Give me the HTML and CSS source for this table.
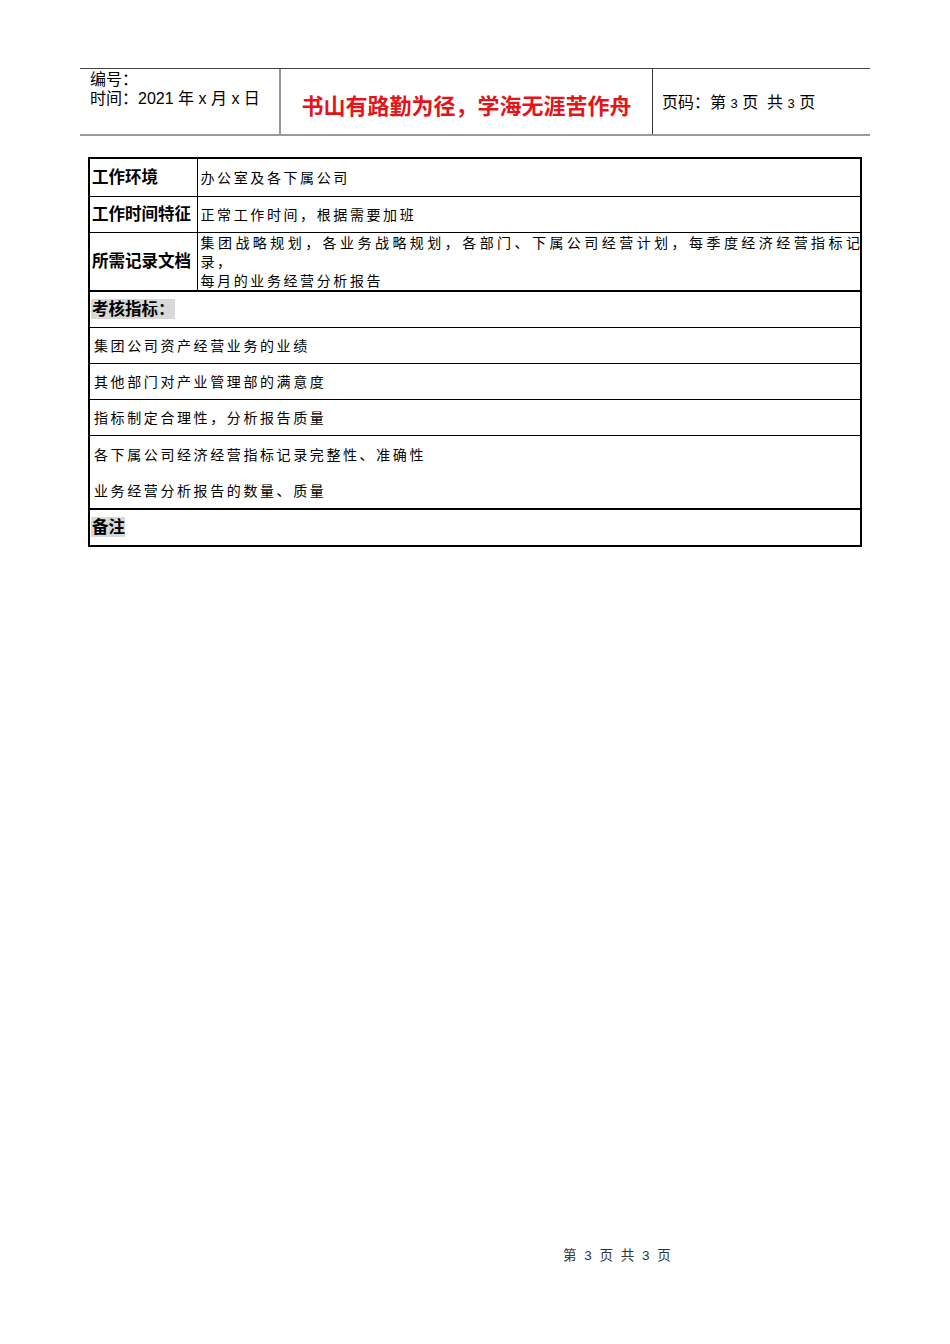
FILE: index.html
```html
<!DOCTYPE html>
<html lang="zh-CN">
<head>
<meta charset="utf-8">
<title>岗位说明书</title>
<link rel="stylesheet" href="styles.css">
</head>
<body>
<div class="page">
  <header class="head">
    <div class="head-left">
      <div>编号：</div>
      <div>时间：2021 年 x 月 x 日</div>
    </div>
    <div class="head-mid">书山有路勤为径，学海无涯苦作舟</div>
    <div class="head-right">页码：第 <span class="num">3</span> 页&nbsp; 共 <span class="num">3</span> 页</div>
  </header>

  <table class="grid">
    <colgroup><col class="c1"><col class="c2"></colgroup>
    <tr class="r38">
      <th>工作环境</th>
      <td>办公室及各下属公司</td>
    </tr>
    <tr class="r36">
      <th>工作时间特征</th>
      <td>正常工作时间，根据需要加班</td>
    </tr>
    <tr class="r59 thick">
      <th>所需记录文档</th>
      <td class="multi"><div class="just">集团战略规划，各业务战略规划，各部门、下属公司经营计划，每季度经济经营指标记</div><div>录，</div><div>每月的业务经营分析报告</div></td>
    </tr>
    <tr class="r36">
      <td colspan="2" class="sec"><span class="hl">考核指标：</span></td>
    </tr>
    <tr class="r36">
      <td colspan="2" class="item">集团公司资产经营业务的业绩</td>
    </tr>
    <tr class="r36">
      <td colspan="2" class="item">其他部门对产业管理部的满意度</td>
    </tr>
    <tr class="r36">
      <td colspan="2" class="item">指标制定合理性，分析报告质量</td>
    </tr>
    <tr class="r73 thick">
      <td colspan="2" class="item pair"><div class="ln">各下属公司经济经营指标记录完整性、准确性</div><div class="ln">业务经营分析报告的数量、质量</div></td>
    </tr>
    <tr class="r37">
      <td colspan="2" class="sec"><span class="hl">备注</span></td>
    </tr>
  </table>

  <footer class="foot">第 3 页 共 3 页</footer>
</div>
</body>
</html>
```

FILE: styles.css
```css
html, body {
  margin: 0;
  padding: 0;
  background: #fff;
}
body {
  font-family: "Liberation Sans", "Noto Sans CJK SC", sans-serif;
  color: #000;
}
.page {
  width: 950px;
  height: 1344px;
  display: flex;
  flex-direction: column;
  box-sizing: border-box;
  padding-top: 68px;
}
.head {
  margin-left: 80px;
  width: 790px;
  height: 68px;
  box-sizing: border-box;
  border-top: 1px solid #444;
  border-bottom: 2px solid #999;
  display: flex;
}
.head-left {
  width: 201px;
  box-sizing: border-box;
  padding: 1px 0 0 10px;
  font-size: 16px;
  line-height: 19px;
  border-right: 2px solid #999;
}
.head-mid {
  width: 372px;
  box-sizing: border-box;
  border-right: 1px solid #333;
  color: #e3151b;
  font-size: 22px;
  font-weight: bold;
  text-align: center;
  padding-top: 21px;
  line-height: 28px;
  font-family: "Noto Sans CJK SC", sans-serif;
}
.head-right {
  flex: 1;
  padding: 24px 0 0 9px;
  font-size: 16px;
  line-height: 20px;
}
.num {
  font-size: 13px;
}
.grid {
  margin: 21px 0 0 88px;
  width: 774px;
  border-collapse: collapse;
  border: 2px solid #000;
  table-layout: fixed;
}
.c1 { width: 108px; }
.grid th, .grid td {
  border: 1px solid #000;
  padding: 0 0 0 3px;
  vertical-align: middle;
  text-align: left;
}
.grid th {
  font-size: 16.5px;
  font-weight: bold;
  line-height: 19px;
  white-space: nowrap;
  padding-left: 2px;
}
.grid td {
  font-family: "Noto Sans CJK SC", sans-serif;
  font-size: 14px;
  letter-spacing: 2.6px;
  line-height: 19px;
}
.grid tr.thick td, .grid tr.thick th {
  border-bottom: 2px solid #000;
}
.r38 { height: 38px; }
.r36 { height: 36px; }
.r37 { height: 37px; }
.r59 { height: 59px; }
.r73 { height: 73px; }
.multi {
  padding-right: 2px;
}
.just {
  text-align: justify;
  text-align-last: justify;
  letter-spacing: 0;
  white-space: nowrap;
}
.grid td.sec {
  font-family: "Liberation Sans", "Noto Sans CJK SC", sans-serif;
  font-size: 16.5px;
  font-weight: bold;
  letter-spacing: 0;
  padding-left: 1px;
}
.hl {
  background: #d9d9d9;
  padding: 1px 0 1px 1px;
}
.grid td.item {
  padding-left: 4px;
}
.pair .ln {
  line-height: 36px;
}
.foot {
  margin-top: auto;
  margin-bottom: 80px;
  padding-left: 563px;
  font-size: 13.5px;
  letter-spacing: 1.5px;
  word-spacing: 1px;
  line-height: 16px;
  color: #333;
  font-family: "Liberation Sans", "Noto Sans CJK SC", sans-serif;
}
```
